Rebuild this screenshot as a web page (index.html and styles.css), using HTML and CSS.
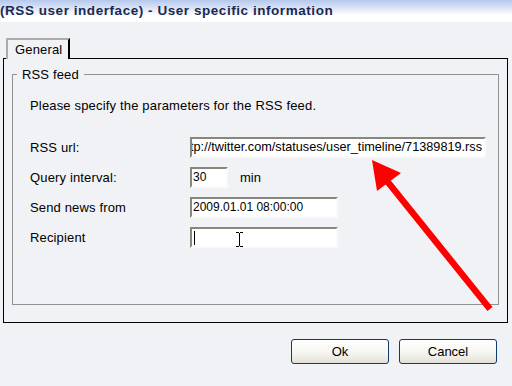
FILE: index.html
```html
<!DOCTYPE html>
<html lang="en">
<head>
  <meta charset="UTF-8">
  <title>User specific information</title>
  <link rel="stylesheet" href="styles.css">
</head>
<body>
  <!-- Title bar -->
  <div class="titlebar">(RSS user inderface) - User specific information</div>

  <div class="tabs">
    <div class="tab">General</div>
  </div>

  <div class="panel">
    <fieldset class="group">
      <legend>RSS feed</legend>
      <p class="intro">Please specify the parameters for the RSS feed.</p>

      <div class="form">
        <label>RSS url:</label>
        <div class="field url"><span>http://twitter.com/statuses/user_timeline/71389819.rss</span></div>

        <label>Query interval:</label>
        <div class="inline">
          <div class="field short">30</div>
          <span class="unit">min</span>
        </div>

        <label>Send news from</label>
        <div class="field medium">2009.01.01 08:00:00</div>

        <label>Recipient</label>
        <div class="field medium"><span class="caret"></span></div>
      </div>
    </fieldset>
  </div>

  <div class="buttons">
    <button type="button">Ok</button>
    <button type="button">Cancel</button>
  </div>

  <!-- annotation arrow + mouse cursor drawn over the dialog -->
  <svg class="overlay" width="512" height="386" viewBox="0 0 512 386">
    <line x1="490" y1="309" x2="387" y2="181" stroke="#ff0000" stroke-width="6.5"/>
    <polygon points="372,160 401,173 377,191" fill="#ff0000"/>
    <g stroke="#000" stroke-width="1" fill="none">
      <path d="M239.5 233 V246"/>
      <path d="M236 232.5 H239 M240 232.5 H243"/>
      <path d="M236 246.5 H239 M240 246.5 H243"/>
    </g>
  </svg>
</body>
</html>
```

FILE: styles.css
```css
body {
  font-family: "Liberation Sans", Arial, sans-serif;
  font-size: 13px;
  background-color: #f1f2f6;
  color: #000;
  margin: 0;
  padding: 0;
  width: 512px;
  height: 386px;
  position: relative;
  overflow: hidden;
}

.titlebar {
  height: 22px;
  line-height: 21px;
  background: linear-gradient(to bottom, #b4c7ec 0%, #ffffff 70%, #ffffff 100%);
  color: #1b2950;
  font-weight: bold;
  font-size: 13.5px;
  letter-spacing: 0.55px;
  white-space: nowrap;
  padding-left: 0;
}

.tabs {
  display: flex;
  padding: 16px 0 0 6px;
}

.tab {
  width: 64px;
  height: 21px;
  box-sizing: border-box;
  border-top: 2px solid #acacac;
  border-left: 2px solid #acacac;
  border-right: 2px solid #000;
  padding: 2px 0 0 7px;
  margin-bottom: -1px;
  background: #f1f2f6;
  position: relative;
  z-index: 1;
  letter-spacing: 0.15px;
}

.panel {
  margin: 0 4px 0 3px;
  height: 265px;
  box-sizing: border-box;
  border: 1px solid #000;
  padding: 8px 8px 0 8px;
}

.group {
  margin: 0;
  height: 238px;
  box-sizing: border-box;
  border: 1px solid #929292;
  padding: 0 0 0 17px;
}

.group legend {
  margin-left: -13px;
  padding: 0 5px;
  letter-spacing: 0.15px;
}

.intro {
  margin: 16px 0 0 0;
  letter-spacing: 0.17px;
}

.form {
  display: grid;
  grid-template-columns: 160px auto;
  row-gap: 9px;
  align-items: center;
  margin-top: 24px;
}

.form label {
  letter-spacing: 0.15px;
}

.field {
  height: 21px;
  box-sizing: border-box;
  background: #fff;
  border: 2px solid;
  border-color: #87877b #fafafa #fafafa #87877b;
  font-size: 12px;
  line-height: 17px;
  padding-left: 1px;
  white-space: nowrap;
  overflow: hidden;
  display: flex;
  align-items: center;
}

.url {
  width: 296px;
  justify-content: flex-end;
  padding-right: 2px;
  font-size: 12.7px;
}

.url span {
  flex-shrink: 0;
}

.short {
  width: 38px;
}

.medium {
  width: 148px;
}

.inline {
  display: flex;
  align-items: center;
}

.unit {
  margin-left: 12px;
}

.caret {
  width: 1px;
  height: 14px;
  background: #000;
  margin-left: 1px;
}

.buttons {
  display: flex;
  justify-content: flex-end;
  gap: 10px;
  padding: 16px 15px 0 0;
}

button {
  width: 98px;
  height: 25px;
  font-family: "Liberation Sans", Arial, sans-serif;
  font-size: 13px;
  color: #000;
  border: 1px solid #0f3b6e;
  border-radius: 3px;
  background: linear-gradient(to bottom, #ffffff 0%, #f4f4ef 60%, #e2dfd6 100%);
  padding: 0;
}

.overlay {
  position: absolute;
  left: 0;
  top: 0;
  pointer-events: none;
}
```
